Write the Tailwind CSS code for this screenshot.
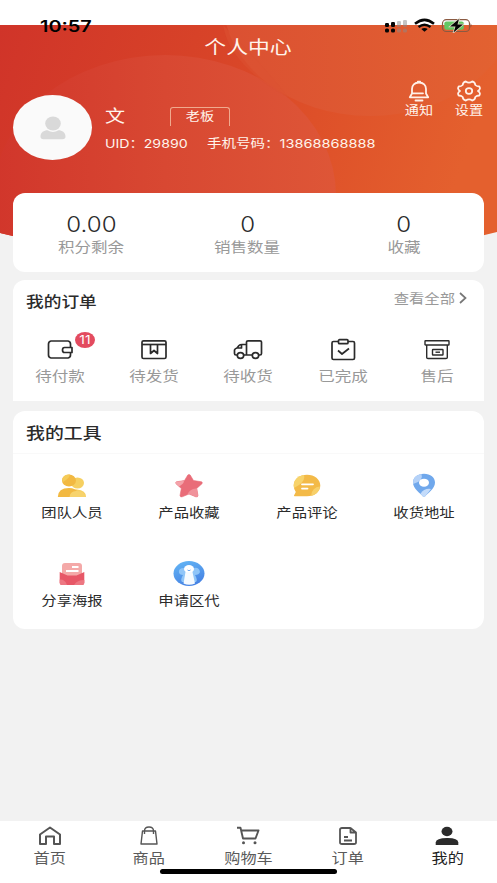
<!DOCTYPE html>
<html lang="zh-CN">
<head>
<meta charset="utf-8">
<meta name="viewport" content="width=device-width, initial-scale=1">
<title>个人中心</title>
<script src="https://cdn.jsdelivr.net/npm/@tailwindcss/browser@4"></script>
</head>
<body class="w-[497px] h-[883px] overflow-hidden bg-[#f2f2f2] font-['Inter','Noto_Sans_CJK_SC',sans-serif] text-[#2b2b2b]">
<div class="relative isolate flex h-[883px] w-[497px] flex-col whitespace-nowrap">

  <!-- header backdrop -->
  <svg class="absolute left-0 top-0 -z-10" width="497" height="250" viewBox="0 0 497 250">
    <defs>
      <linearGradient id="bg" x1="0" y1="0" x2="1" y2="0.15"><stop offset="0" stop-color="#d03429"/><stop offset=".45" stop-color="#d84428"/><stop offset=".68" stop-color="#de5029"/><stop offset="1" stop-color="#e4602e"/></linearGradient>
      <linearGradient id="c1" x1="0" y1="0" x2="1" y2="0"><stop offset="0" stop-color="#d1362b"/><stop offset=".5" stop-color="#d84832"/><stop offset="1" stop-color="#de5637"/></linearGradient>
      <linearGradient id="c2" x1="0" y1="0" x2="1" y2="0"><stop offset="0" stop-color="#db5032"/><stop offset="1" stop-color="#e36331"/></linearGradient>
      <clipPath id="clip"><path d="M0 25H497V232Q380 262 248 262Q117 262 0 233Z"/></clipPath>
    </defs>
    <rect width="497" height="25" fill="#fff"/>
    <g clip-path="url(#clip)">
      <rect y="25" width="497" height="225" fill="url(#bg)"/>
      <ellipse cx="370" cy="0" rx="147" ry="116" fill="url(#c2)"/>
      <ellipse cx="165" cy="195" rx="171" ry="140" fill="url(#c1)"/>
      <path d="M223 25Q230 66 289 98Q262 64 223 25Z" fill="#dc5132" opacity=".5"/>
    </g>
  </svg>

  <header class="flex h-[193px] shrink-0 flex-col text-[#fff4ec]">
    <div class="flex h-9 shrink-0 items-start justify-between pl-[40px] pr-[25px] pt-[17px] text-black">
      <span class="origin-left scale-x-[1.24] text-[16px] font-semibold leading-[18px]">10:57</span>
      <svg width="88" height="16" viewBox="0 0 88 16">
        <g fill="#050505"><rect x="1" y="6" width="4" height="4" rx="1.2"/><rect x="7" y="5" width="4" height="5" rx="1.2"/><rect x="1" y="11.5" width="4" height="4" rx="1.6"/><rect x="7" y="11.5" width="4" height="4" rx="1.6"/></g>
        <g fill="#8a8a8a" opacity=".5"><rect x="13" y="4" width="4" height="6" rx="1.2"/><rect x="19" y="3" width="4" height="7" rx="1.2"/><rect x="13" y="11.5" width="4" height="4" rx="1.6"/><rect x="19" y="11.5" width="4" height="4" rx="1.6"/></g>
        <g fill="none" stroke="#050505" stroke-width="2.5"><path d="M31 6.8Q40.500-1 50 6.800"/><path d="M34.500 10Q40.500 5.500 46.500 10"/></g>
        <path d="M37.300 12Q40.500 9.800 43.700 12L40.500 14.800Z" fill="#050505"/>
        <rect x="58.500" y="2.700" width="27" height="11.800" rx="3.800" fill="none" stroke="#8a5a42" stroke-width="1.200"/>
        <rect x="60.300" y="4.500" width="19.500" height="8.300" rx="2" fill="#63c863"/>
        <path d="M86.600 6.300Q88.300 8.500 86.600 10.700Z" fill="#7a4433"/>
        <path d="M75 2L66 9.500H71.500L69.500 15.500L79 7.500H73.500Z" fill="#050505" stroke="#e6d9c8" stroke-width="1.400" paint-order="stroke"/>
      </svg>
    </div>
    <h1 class="flex h-[22px] shrink-0 items-center justify-center"><span class="scale-x-[1.18] text-[18.500px] font-normal leading-[22px]">个人中心</span></h1>

    <div class="-mt-px flex items-start">
      <div class="ml-[13px] mt-[38px] flex h-[65px] w-[79px] shrink-0 items-center justify-center rounded-[50%] bg-[#fafafa]">
        <svg width="26" height="24" viewBox="0 0 26 24" fill="#d9d9d9"><ellipse cx="13" cy="7.500" rx="7.800" ry="7"/><path d="M.5 20.500C.5 16.500 4 14.300 7.500 14.300Q13 17.500 18.500 14.300C22 14.300 25.500 16.500 25.500 20.500Q25.500 23.300 22.500 23.300H3.500Q.5 23.300 .5 20.500Z"/></svg>
      </div>
      <div class="ml-[13px] mt-[48px] flex w-[271px] flex-col">
        <div class="flex h-[22px] items-center">
          <span class="w-[65px] text-[17px] leading-[22px]"><span class="inline-block origin-left scale-x-[1.18]">文</span></span>
          <span class="flex h-[19px] w-[60px] items-center justify-center rounded-t-[3px] border border-b-0 border-[#f0aa8e]"><span class="scale-x-[1.18] text-[12px] leading-[17px]">老板</span></span>
        </div>
        <div class="mt-[7px] flex h-[20px] items-center text-[12px] leading-[20px]">
          <span class="w-[102px]"><span class="inline-block origin-left scale-x-[1.18]">UID：29890</span></span>
          <span class="inline-block origin-left scale-x-[1.21]">手机号码：13868868888</span>
        </div>
      </div>
      <div class="mt-[23px] flex">
        <div class="ml-[18px] flex w-[50px] flex-col items-center">
          <svg width="22" height="22" viewBox="0 0 22 22" fill="none" stroke="#fff0e8" stroke-width="1.800" stroke-linecap="round" stroke-linejoin="round"><path d="M11 2.500C6.500 2.500 4 5.500 4 9V13.500L1.800 17.300H20.200L18 13.500V9C18 5.500 15.500 2.500 11 2.500ZM9.800 2.300V1.700H12.200V2.300M4.500 13.300H15M7.500 20.500H14.500"/></svg>
          <span class="mt-[2px] scale-x-[1.18] text-[12px] leading-[14px]">通知</span>
        </div>
        <div class="flex w-[50px] flex-col items-center">
          <svg width="24" height="22" viewBox="0 0 24 22" fill="none" stroke="#fff0e8" stroke-width="1.800" stroke-linejoin="round"><path d="M8.800 1.500Q12 3.700 15.200 1.500Q18 2 18.300 5Q19.700 6.500 22.300 6.500Q24 9 21 11Q24 13 22.300 15.500Q19.700 15.500 18.300 17Q18 20 15.200 20.500Q12 18.300 8.800 20.500Q6 20 5.700 17Q4.300 15.500 1.700 15.500Q0 13 3 11Q0 9 1.700 6.500Q4.300 6.500 5.700 5Q6 2 8.800 1.500Z"/><ellipse cx="12" cy="11" rx="3.200" ry="2.800"/></svg>
          <span class="mt-[2px] scale-x-[1.18] text-[12px] leading-[14px]">设置</span>
        </div>
      </div>
    </div>
  </header>

  <main class="flex flex-1 flex-col px-[13px]">
    <section class="grid h-[79px] grid-cols-3 rounded-[12px] bg-white pr-[2px] pt-[18px] text-center">
      <div class="flex flex-col items-center"><b class="scale-x-[1.12] text-[21.500px] font-light leading-[26px]">0.00</b><span class="scale-x-[1.18] text-[14px] leading-[20px] text-[#999]">积分剩余</span></div>
      <div class="flex flex-col items-center"><b class="scale-x-[1.12] text-[21.500px] font-light leading-[26px]">0</b><span class="scale-x-[1.18] text-[14px] leading-[20px] text-[#999]">销售数量</span></div>
      <div class="flex flex-col items-center"><b class="scale-x-[1.12] text-[21.500px] font-light leading-[26px]">0</b><span class="scale-x-[1.18] text-[14px] leading-[20px] text-[#999]">收藏</span></div>
    </section>

    <section class="mt-2 h-[121px] rounded-t-[12px] bg-white">
      <div class="flex h-[42px] items-center justify-between pl-[13px] pr-[17px]">
        <h2 class="mt-[2px] origin-left scale-x-[1.18] text-[15px] font-medium leading-[20px]">我的订单</h2>
        <div class="flex items-center pb-[6px] text-[#999]"><span class="origin-right scale-x-[1.18] text-[13px] leading-[20px]">查看全部</span><svg class="ml-[4px]" width="8" height="12" viewBox="0 0 8 12" fill="none" stroke="#777" stroke-width="1.700"><path d="M1 1L6.500 6L1 11"/></svg></div>
      </div>
      <div class="grid grid-cols-5 pt-[15px]">
        <div class="flex flex-col items-center">
          <div class="relative">
            <svg width="26" height="26" viewBox="0 0 26 26" fill="none" stroke="#2b2b2b" stroke-width="1.700" stroke-linejoin="round"><path d="M23.500 10V7Q23.500 4.500 21 4H4Q1.500 4.500 1.500 7V18Q1.500 20.500 4 21H21Q23.500 20.500 23.500 18V16"/><path d="M25 10.500H17.500Q15.500 10.500 15.500 13Q15.500 15.500 17.500 15.500H25Z"/></svg>
            <span class="absolute left-[28px] top-[-5px] flex h-[16px] w-[20px] items-center justify-center rounded-[50%] bg-[#e34b5f] text-[12px] leading-[16px] text-white"><span class="scale-x-[1.15]">11</span></span>
          </div>
          <span class="mt-[3px] scale-x-[1.18] text-[14px] leading-[20px] text-[#999]">待付款</span>
        </div>
        <div class="flex flex-col items-center">
          <svg width="26" height="26" viewBox="0 0 26 26" fill="none" stroke="#2b2b2b" stroke-width="1.700" stroke-linejoin="round"><rect x="1" y="3.800" width="24" height="17.700" rx="1.500"/><path d="M1 7.500H25"/><path d="M9.500 7.500V16.500L13 13.500L16.500 16.500V7.500"/></svg>
          <span class="mt-[3px] scale-x-[1.18] text-[14px] leading-[20px] text-[#999]">待发货</span>
        </div>
        <div class="flex flex-col items-center">
          <svg width="30" height="26" viewBox="0 0 30 26" fill="none" stroke="#2b2b2b" stroke-width="1.700" stroke-linejoin="round"><path d="M4.500 18H3Q1.500 18 1.500 16.500V13Q2 11.500 4 11L6 8.500Q7 7.500 9 7.500H13.500M10 18H19.500M25.500 18H27Q28.500 18 28.500 16.500V5Q28.500 3.800 27 3.800H15Q13.500 3.800 13.500 5V18M8.500 8V11H4"/><ellipse cx="7.500" cy="18.500" rx="3.200" ry="2.800"/><ellipse cx="22.500" cy="18.500" rx="3.200" ry="2.800"/></svg>
          <span class="mt-[3px] scale-x-[1.18] text-[14px] leading-[20px] text-[#999]">待收货</span>
        </div>
        <div class="flex flex-col items-center">
          <svg width="26" height="26" viewBox="0 0 26 26" fill="none" stroke="#2b2b2b" stroke-width="1.700" stroke-linejoin="round"><path d="M8.500 4.500H3.500Q2 4.500 2 6V21Q2 22.500 3.500 22.500H23Q24.500 22.500 24.500 21V6Q24.500 4.500 23 4.500H18"/><rect x="8.500" y="2.700" width="9.500" height="4" rx="1"/><path d="M8 13.500L12 17L19 11.500"/></svg>
          <span class="mt-[3px] scale-x-[1.18] text-[14px] leading-[20px] text-[#999]">已完成</span>
        </div>
        <div class="flex flex-col items-center">
          <svg width="26" height="26" viewBox="0 0 26 26" fill="none" stroke="#2b2b2b" stroke-width="1.400" stroke-linejoin="round"><rect x="1" y="3.800" width="24" height="4.200" rx=".5"/><path d="M2.700 8V20.500Q2.700 21.500 4 21.500H22Q23.300 21.500 23.300 20.500V8"/><rect x="8.500" y="12.500" width="10.500" height="5.500" rx=".5"/><path d="M11.500 15.200H16"/></svg>
          <span class="mt-[3px] scale-x-[1.18] text-[14px] leading-[20px] text-[#999]">售后</span>
        </div>
      </div>
    </section>

    <section class="mt-[10px] h-[218px] rounded-[12px] bg-white">
      <div class="flex h-[43px] items-center border-b border-[#f9f9f9] pl-[13px]"><h2 class="mt-[2px] origin-left scale-x-[1.18] text-[16px] font-medium leading-[20px]">我的工具</h2></div>
      <div class="grid auto-rows-[88px] grid-cols-4 pr-px pt-[18px]">
        <div class="flex flex-col items-center">
          <svg width="30" height="28" viewBox="0 0 30 28"><ellipse cx="20.500" cy="11" rx="6.500" ry="5.500" fill="#f6d061"/><path d="M15 25Q16 16 20 17.500Q29 18 29 25Z" fill="#f6cf62"/><ellipse cx="12" cy="8.500" rx="7" ry="6" fill="#f2b942"/><path d="M.8 25Q1 16 12 16Q19 16 21 21L22 25Z" fill="#f2b942"/><path d="M12.500 25Q13 19.500 19 19Q27 18.500 29 25Z" fill="#f7d36d"/><path d="M5.500 6Q8 2 13 2.600Q12 7 6 10Q4.800 8 5.500 6Z" fill="#f5cb58"/></svg>
          <span class="mt-[2px] scale-x-[1.18] text-[13px] leading-[20px]">团队人员</span>
        </div>
        <div class="flex flex-col items-center">
          <svg width="28" height="28" viewBox="0 0 28 28"><path d="M12.800 3Q14 1.800 15.200 3L18.500 8.500L26.500 9.800Q28 10.500 27 11.700L21.700 16.500L23 23.500Q22.800 25.500 20.800 24.800L14 22L7.200 24.800Q5.200 25.500 5 23.500L6.300 16.500L1 11.700Q0 10.500 1.500 9.800L9.500 8.500Z" fill="#e96d79" stroke="#e96d79" stroke-width=".6"/><path d="M1 11.700Q0 10.500 1.500 9.800L9 8.800Q9 12 4 14.400Z" fill="#f4a3aa"/><path d="M12 23Q15 16 22 16.500L23 23.500Q22.800 25.500 20.800 24.800L14 22Z" fill="#f0929b"/></svg>
          <span class="mt-[2px] scale-x-[1.18] text-[13px] leading-[20px]">产品收藏</span>
        </div>
        <div class="flex flex-col items-center">
          <svg width="28" height="28" viewBox="0 0 28 28"><path d="M14 2.800C21.500 2.800 27.300 7.500 27.300 13.500S21.500 24.300 14 24.300H1.500Q.3 24 1.500 22.500L2.800 20Q.7 17 .7 13.500C.7 7.500 6.500 2.800 14 2.800Z" fill="#f3ba48"/><path d="M1 16Q-1 5 11 3Q13 10 1 16Z" fill="#f7d36b"/><path d="M18 24Q19 15 27 14.500Q26 22 18 24Z" fill="#f7d06a"/><path d="M9 12.300H20M9 16.600H14.500" stroke="#fff" stroke-width="1.800" stroke-linecap="round"/></svg>
          <span class="mt-[2px] scale-x-[1.18] text-[13px] leading-[20px]">产品评论</span>
        </div>
        <div class="flex flex-col items-center">
          <svg width="24" height="28" viewBox="0 0 24 28"><path d="M12 1.800C18.500 1.800 23 5.500 23 10.500C23 16.500 16 21 12.800 24.700Q12 25.500 11.200 24.700C8 21 1 16.500 1 10.500C1 5.500 5.500 1.800 12 1.800Z" fill="#70a8ec"/><path d="M1 12Q0 3.500 9.500 2Q12 9 1 12Z" fill="#b5d2f8"/><path d="M8.500 21.800Q12 16 19 17L12.800 24.700Q12 25.500 11.200 24.700Z" fill="#c3dbfa"/><ellipse cx="12" cy="10.700" rx="5" ry="4" fill="#fff"/></svg>
          <span class="mt-[2px] scale-x-[1.18] text-[13px] leading-[20px]">收货地址</span>
        </div>
        <div class="flex flex-col items-center">
          <svg width="26" height="28" viewBox="0 0 26 28"><path d="M3 16V6Q3 3 6 3H20Q23 3 23 6V16Z" fill="#f4a9a8"/><path d="M13 7H19.500M7 11H19.500" stroke="#fff" stroke-width="2"/><path d="M.7 12L8.500 15.500H17.500L25.300 12V23Q25.300 25 23 25H3Q.7 25 .7 23Z" fill="#e75767"/><path d="M.7 19.500Q6 19 8 25H3Q.7 25 .7 23ZM15 25Q18 20 25.300 20V23Q25.300 25 23 25Z" fill="#ed7782"/></svg>
          <span class="mt-[2px] scale-x-[1.18] text-[13px] leading-[20px]">分享海报</span>
        </div>
        <div class="flex flex-col items-center">
          <svg width="32" height="28" viewBox="0 0 32 28"><defs><linearGradient id="sky" x1="0" y1="0" x2=".4" y2="1"><stop offset="0" stop-color="#65b8f6"/><stop offset="1" stop-color="#4784e4"/></linearGradient></defs><ellipse cx="16" cy="13.500" rx="15.500" ry="12.500" fill="url(#sky)"/><path d="M11 8Q5 8 6 13Q7 15 10 15Q7 20 9 22H23Q25 20 22 15Q26 15 27 12Q26 7 21 8Z" fill="#8fc5f8"/><ellipse cx="16" cy="9" rx="5" ry="4" fill="#fff"/><path d="M12.500 12H19.500L22 23.500Q16 26 10.500 23.500Z" fill="#f5faff"/><path d="M14.500 10Q16 11.500 17.500 10" stroke="#6fa9ef" fill="none"/></svg>
          <span class="mt-[2px] scale-x-[1.18] text-[13px] leading-[20px]">申请区代</span>
        </div>
      </div>
    </section>
  </main>

  <nav class="relative grid h-[62px] shrink-0 grid-cols-5 bg-white pt-[4px] text-[#5a5a5a]">
    <div class="flex flex-col items-center"><svg width="24" height="22" viewBox="0 0 24 22" fill="none" stroke="#555" stroke-width="2" stroke-linejoin="round"><path d="M2 9.500L12 2.500L22 9.500V19H16V11.500H8V19H2Z"/></svg><span class="mt-px scale-x-[1.18] text-[13.700px] leading-[20px]">首页</span></div>
    <div class="flex flex-col items-center"><svg width="20" height="22" viewBox="0 0 20 22" fill="none" stroke="#555" stroke-width="1.400" stroke-linejoin="round"><path d="M3.500 6H16.500L18 19H2ZM5.500 9V6Q5.500 2 10 2T14.500 6V9"/></svg><span class="mt-px scale-x-[1.18] text-[13.700px] leading-[20px]">商品</span></div>
    <div class="flex flex-col items-center"><svg width="24" height="22" viewBox="0 0 24 22" fill="none" stroke="#555" stroke-width="1.900" stroke-linejoin="round"><path d="M1 2.700H4.500L7 13.500H19.500L22.500 5.500H5"/><circle cx="7.500" cy="17.700" r="1.500" fill="#555" stroke="none"/><circle cx="19" cy="17.700" r="1.500" fill="#555" stroke="none"/></svg><span class="mt-px scale-x-[1.18] text-[13.700px] leading-[20px]">购物车</span></div>
    <div class="flex flex-col items-center"><svg width="20" height="22" viewBox="0 0 20 22" fill="none" stroke="#555" stroke-width="1.800" stroke-linejoin="round"><path d="M12.500 3H4Q2 3 2 4.500V17.500Q2 19 4 19H16Q18 19 18 17.500V7.500L12.500 3V7.500H18"/><path d="M6 12H10M6 15.500H14"/></svg><span class="mt-px scale-x-[1.18] text-[13.700px] leading-[20px]">订单</span></div>
    <div class="flex flex-col items-center text-[#222]"><svg width="24" height="22" viewBox="0 0 24 22" fill="#2b2b2b"><ellipse cx="12" cy="6.500" rx="5.500" ry="4.700"/><path d="M.7 20V17.500Q1 13.200 12 13T23.300 17.500V20Z"/></svg><span class="mt-px scale-x-[1.18] text-[13.700px] leading-[20px]">我的</span></div>
    <div class="absolute left-[160px] top-[48px] h-[5px] w-[177px] rounded-full bg-black"></div>
  </nav>
</div>
</body>
</html>
